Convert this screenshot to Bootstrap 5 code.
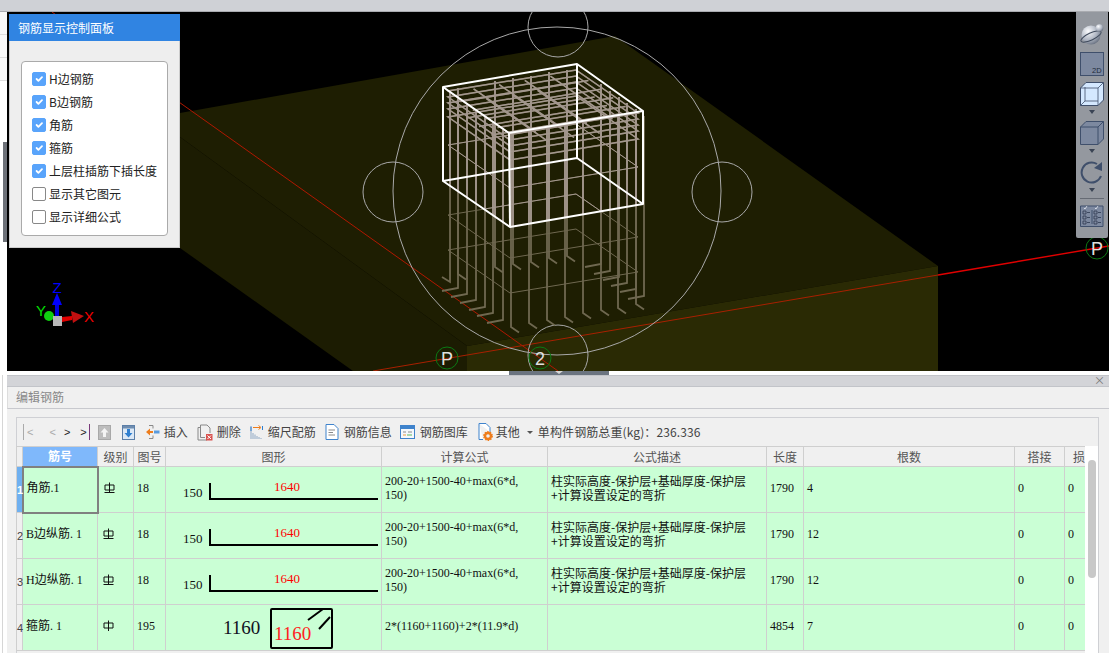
<!DOCTYPE html>
<html lang="zh-CN">
<head>
  <meta charset="UTF-8" />
  <title>编辑钢筋</title>
  <link href="https://cdn.jsdelivr.net/npm/bootstrap@5.3.0/dist/css/bootstrap.min.css" rel="stylesheet">
  <style>
    html, body { height: 100%; overflow: hidden; }
    body { background: #fff; font-family: "Noto Sans CJK SC", "Liberation Sans", sans-serif; font-size: 12px; color: #333; }
    .app-frame { width: 1109px; height: 653px; overflow: hidden; }
    .top-strip { height: 12px; background: #cfd1d6; border-bottom: 1px solid #a9abb0; }
    .view-row { height: 359px; }
    .side-strip { width: 7px; background: #fff; flex: none; position: relative; }
    .side-cell { height: 23px; border-bottom: 1px solid #ddd; background: #f8f8f8; }
    .side-handle { position: absolute; left: 3px; top: 130px; width: 4px; height: 100px; background: #6d7178; }
    .view-canvas { width: 1102px; background: #000; position: relative; }
    .view-canvas > svg { display: block; }
    .view-canvas text { font-family: "Liberation Sans", sans-serif; }

    .rebar-panel { position: absolute; left: 2px; top: 2px; width: 171px; height: 234px; background: #eee; border: 1px solid #ccc; border-top: 0; }
    .rebar-panel-title { height: 27px; margin: 0 -1px; padding-left: 9px; line-height: 27px; background: #3084e2; color: #fff; }
    .rebar-options { margin: 20px 11px 0; height: 175px; padding: 5px 0 0 10px; background: #fff; border: 1px solid #aaa; border-radius: 4px; }
    .rebar-options .form-check { display: flex; align-items: center; height: 23px; min-height: 0; margin: 0; padding: 0; color: #222; }
    .rebar-options .form-check-input { width: 14px; height: 14px; margin: 0 3px 0 0; float: none; border: 1px solid #888; border-radius: 2px; }
    .rebar-options .form-check-input:checked { background-color: #59a4fb; border-color: #59a4fb; }

    .view-tools { position: absolute; right: 1px; top: 0; width: 32px; height: 226px; padding-top: 10px; background: #94989f; border-radius: 0 0 2px 2px; }
    .view-tools svg { display: block; }
    .tool-gap { margin-top: 6px; }
    .tool-caret { width: 0; height: 0; margin: 4px 0 7px; border-left: 3px solid transparent; border-right: 3px solid transparent; border-top: 4px solid #3a4354; }
    .tool-line { width: 24px; height: 1px; margin: 6px 0 4px; background: #666b74; }

    .split-bar { height: 4px; background: #fff; }
    .split-grip { width: 100px; height: 4px; margin-left: 509px; background: #6b7480; position: relative; }
    .split-grip::after { content: ""; position: absolute; left: 46px; top: 0; border-left: 4px solid transparent; border-right: 4px solid transparent; border-top: 3px solid #d8d8d8; }

    .lower-row { height: 278px; }
    .lower-strip { width: 7px; flex: none; background: #fff; }
    .lower-strip div { width: 1px; height: 100%; margin-left: 2px; background: #d6d6d6; }
    .edit-pane { width: 1102px; background: #f0f0f0; }
    .pane-bar { height: 12px; background: #d3d4d8; border-top: 1px solid #c2c4c9; border-bottom: 1px solid #c2c4c9; line-height: 9px; text-align: right; padding-right: 4px; color: #777; font-size: 11px; }
    .pane-head { height: 22px; line-height: 20px; padding-left: 8px; color: #888; border-bottom: 1px solid #c8c9ce; border-left: 1px solid #ddd; }
    .grid-box { margin: 8px 10px 0 9px; border: 1px solid #cfd0d4; border-bottom: 0; height: 240px; }
    .grid-bar { height: 28px; padding-left: 6px; color: #444; white-space: nowrap; }
    .grid-bar svg { display: block; flex: none; }
    .nav-step { font-family: "Liberation Sans", sans-serif; font-size: 11px; color: #222; }
    .nav-step.is-off { color: #aaa; }
    .nav-pipe { border-left: 1px solid #aaa; padding-left: 3px; }
    .nav-pipe-end { border-right: 1px solid #7a3a7a; margin-left: 10px; padding-right: 2px; }
    .bar-text { margin-left: 4px; }
    .bar-caret { width: 0; height: 0; margin-left: 7px; border-left: 3px solid transparent; border-right: 3px solid transparent; border-top: 3px solid #555; }
    .bar-total { letter-spacing: .1px; margin-left: 5px; }

    .grid-body { height: 211px; margin-left: -1px; }
    .grid-scroll { width: 1069px; overflow: hidden; flex: none; }
    .scroll-rail { width: 14px; background: #fff; padding: 14px 0 0 3px; }
    .scroll-thumb { width: 8px; height: 118px; background: #c8c8c8; border-radius: 4px; }

    .rebar-table { table-layout: fixed; width: 1069px; margin: 0; border-color: #cfcfcf; font-family: "Liberation Serif", "Noto Sans CJK SC", serif; font-size: 12px; color: #111; }
    .rebar-table.table > :not(caption) > * > * { padding: 0; box-shadow: none; color: inherit; overflow: hidden; }
    .rebar-table.table thead th { height: 20px; line-height: 18px; background: #f0f0f0; color: #555; font-family: "Noto Sans CJK SC", sans-serif; font-weight: 400; text-align: center; vertical-align: middle; white-space: nowrap; }
    .rebar-table.table thead th.is-picked { background: #7fb8fb; color: #fff; font-weight: 700; }
    .rebar-table.table thead th.is-clipped { text-align: left; padding-left: 8px; }
    .rebar-table.table tbody td { height: 45px; background: #caffd5; vertical-align: middle; padding: 0 3px 3px; line-height: 14px; }
    .rebar-table.table tbody td.row-no { padding: 0; text-align: center; font-family: "Liberation Sans", sans-serif; font-size: 11px; color: #444; background: #f0f0f0; overflow: visible; }
    .rebar-table.table tbody td.row-no.is-picked { background: #6fb0f0; color: #fff; font-weight: 700; }
    .rebar-table.table tbody td.is-active { border: 2px solid #808080; }
    .rebar-table.table tbody td.shape-cell { padding: 0; }
    .rebar-table .cjk-text { font-family: "Noto Sans CJK SC", sans-serif; }
    .shape-cell svg { display: block; }
    .shape-cell text { font-family: "Liberation Serif", serif; }
    .grade-mark { display: block; margin-left: 2px; }
  </style>
</head>
<body>
<div class="app-frame d-flex flex-column">
  <div class="top-strip"></div>

  <div class="view-row d-flex">
    <div class="side-strip">
      <div class="side-cell"></div>
      <div class="side-cell"></div>
      <div class="side-cell"></div>
      <div class="side-handle"></div>
    </div>

    <div class="view-canvas">
      <svg id="scene" width="1102" height="359" viewBox="7 12 1102 359">
        <defs>
          <clipPath id="boxClip"><polygon points="443,87 577,64 643,111 643,204 510,227 443,181"/></clipPath>
          <g id="cage" fill="none" stroke="currentColor"></g>
        </defs>
        <!-- foundation slab -->
        <polygon points="180,113 615,36 938,266 467,346 180,137" fill="#1e1e02"/>
        <polygon points="180,137 467,346 467,371 353,371 180,248" fill="#1c1c02"/>
        <polygon points="467,346 938,266 938,371 467,371" fill="#2a2a04"/>
        <!-- axis lines -->
        <line x1="52" y1="12" x2="558" y2="371" stroke="#b01800"/>
        <line x1="373" y1="371" x2="938" y2="275" stroke="#a82000"/>
        <line x1="938" y1="275" x2="1109" y2="246" stroke="#e00000" stroke-width="1.4"/>
        <!-- section circles -->
        <g fill="none" stroke="#a8a8a8">
          <circle cx="557" cy="191" r="164"/>
          <circle cx="558" cy="27" r="30"/>
          <circle cx="393" cy="192" r="30"/>
          <circle cx="722" cy="192" r="30"/>
          <circle cx="558" cy="355" r="30"/>
        </g>
        <use href="#cage" style="color:#6f6850"/>
        <g clip-path="url(#boxClip)"><use href="#cage" style="color:#a3978e"/></g>
        <!-- column box -->
        <g fill="none" stroke="#fff" stroke-width="2" stroke-linejoin="round">
          <polygon points="443,87 577,64 643,111 509,133"/>
          <polygon points="443,181 577,158 643,204 510,227"/>
          <line x1="443" y1="87" x2="443" y2="181"/>
          <line x1="577" y1="64" x2="577" y2="158"/>
          <line x1="643" y1="111" x2="643" y2="204"/>
          <line x1="509" y1="133" x2="510" y2="227"/>
        </g>
        <!-- grid bubbles -->
        <g fill="none" stroke="#0b7a14">
          <circle cx="447" cy="358" r="11"/>
          <circle cx="540" cy="358" r="11"/>
          <circle cx="1097" cy="248" r="11"/>
        </g>
        <g fill="#e0e0e0" font-size="18" text-anchor="middle">
          <text x="447" y="365">P</text>
          <text x="540" y="365">2</text>
          <text x="1097" y="255">P</text>
        </g>
        <!-- axis triad -->
        <text x="57" y="293" fill="#0000ff" font-size="15" text-anchor="middle">Z</text>
        <rect x="55" y="303" width="4" height="14" fill="#0000e0"/>
        <polygon points="57,293 52,305 62,305" fill="#0000ff"/>
        <text x="41" y="316" fill="#00e000" font-size="15" text-anchor="middle">Y</text>
        <circle cx="49" cy="316" r="5" fill="#10d010"/>
        <polygon points="62,317 72,316 72,320 62,322" fill="#e00000"/>
        <polygon points="84,316 71,311 73,323" fill="#c01010"/>
        <text x="89" y="322" fill="#f00000" font-size="15" text-anchor="middle">X</text>
        <rect x="53" y="316" width="9" height="10" fill="#b8b8b8"/>
      </svg>

      <div class="rebar-panel">
        <div class="rebar-panel-title">钢筋显示控制面板</div>
        <div class="rebar-options">
          <label class="form-check"><input class="form-check-input" type="checkbox" checked>H边钢筋</label>
          <label class="form-check"><input class="form-check-input" type="checkbox" checked>B边钢筋</label>
          <label class="form-check"><input class="form-check-input" type="checkbox" checked>角筋</label>
          <label class="form-check"><input class="form-check-input" type="checkbox" checked>箍筋</label>
          <label class="form-check"><input class="form-check-input" type="checkbox" checked>上层柱插筋下插长度</label>
          <label class="form-check"><input class="form-check-input" type="checkbox">显示其它图元</label>
          <label class="form-check"><input class="form-check-input" type="checkbox">显示详细公式</label>
        </div>
      </div>

      <div class="view-tools d-flex flex-column align-items-center">
        <svg width="24" height="24" viewBox="0 0 24 24">
          <defs><radialGradient id="ballFill" cx=".35" cy=".3" r=".85"><stop offset="0" stop-color="#fbfcfe"/><stop offset=".55" stop-color="#aeb5c2"/><stop offset="1" stop-color="#4f5868"/></radialGradient></defs>
          <circle cx="11" cy="13" r="9.500" fill="url(#ballFill)"/>
          <ellipse cx="11" cy="14.500" rx="11" ry="3.500" transform="rotate(-25 11 14.500)" fill="none" stroke="#3f4a5c"/>
          <circle cx="19.500" cy="6" r="3.800" fill="url(#ballFill)"/>
        </svg>
        <svg class="tool-gap" width="24" height="24" viewBox="0 0 24 24">
          <rect x=".5" y=".5" width="23" height="23" fill="#7d89a0" stroke="#3f4f6b"/>
          <text x="12" y="21" font-family="Liberation Sans, sans-serif" font-size="7.5" fill="#20293a">2D</text>
        </svg>
        <svg class="tool-gap" width="24" height="24" viewBox="0 0 24 24">
          <polygon points=".5,6 6,.5 23.5,.5 23.5,18 18,23.5 .5,23.5" fill="#d4e8ff" stroke="#3f4f6b"/>
          <path d="M.5 6H18V23.5M18 6L23.5 .5M5 5V19H18M5 19L.5 23.5" fill="none" stroke="#3f4f6b" stroke-width=".8"/>
        </svg>
        <div class="tool-caret"></div>
        <svg width="24" height="24" viewBox="0 0 24 24">
          <polygon points=".5,6 6,.5 23.5,.5 23.5,18 18,23.5 .5,23.5" fill="#7d89a0" stroke="#3f4f6b"/>
          <path d="M.5 6H18V23.5M18 6L23.5 .5" fill="none" stroke="#3f4f6b"/>
        </svg>
        <div class="tool-caret"></div>
        <svg width="24" height="24" viewBox="0 0 24 24">
          <path d="M21 16A10 10 0 1 1 17 4" fill="none" stroke="#3f4f6b" stroke-width="2"/>
          <polygon points="22,2 22,11 14,8" fill="#3f4f6b"/>
        </svg>
        <div class="tool-caret mb-0"></div>
        <div class="tool-line"></div>
        <svg width="24" height="24" viewBox="0 0 24 24">
          <path d="M1 3H23V23.500H.5V3ZM12 7V21" fill="#7d89a0" stroke="#3f4f6b"/>
          <path d="M3 8h3v3H3zM3 13h3v3H3zM3 18h3v3H3zM14 8h3v3h-3zM14 13h3v3h-3zM14 18h3v3h-3z" fill="none" stroke="#2d394f" stroke-width=".8"/>
          <path d="M7 9.500h3M7 14.500h3M7 19.500h3M18 9.500h3M18 14.500h3M18 19.500h3" stroke="#2d394f" stroke-width=".8"/>
          <path d="M4 5l1 1 2-3M15 5l1 1 2-3" fill="none" stroke="#e8ecf4" stroke-width=".8"/>
        </svg>
      </div>
    </div>
  </div>

  <div class="split-bar"><div class="split-grip"></div></div>

  <div class="lower-row d-flex">
    <div class="lower-strip"><div></div></div>
    <div class="edit-pane">
      <div class="pane-bar">×</div>
      <div class="pane-head">编辑钢筋</div>

      <div class="grid-box">
        <div class="grid-bar d-flex align-items-center">
          <span class="nav-step nav-pipe is-off">&lt;</span>
          <span class="nav-step is-off ms-3">&lt;</span>
          <span class="nav-step ms-2">&gt;</span>
          <span class="nav-step nav-pipe-end">&gt;</span>
          <svg style="margin-left:8px" width="13" height="15" viewBox="0 0 13 15"><rect x=".5" y=".5" width="12" height="14" fill="#bdbdbd" stroke="#a8a8a8"/><path d="M6.500 3L2.500 7.500H5V12H8V7.500H10.500Z" fill="#f4f4f4"/></svg>
          <svg style="margin-left:11px" width="13" height="15" viewBox="0 0 13 15"><rect x=".5" y=".5" width="12" height="14" fill="#dbe8f6" stroke="#5c7fa8"/><rect x="1" y="1" width="11" height="2.500" fill="#6f8db0"/><path d="M6.500 12.500L2.500 8H5V4H8V8H10.500Z" fill="#2f7fd0"/></svg>
          <svg style="margin-left:10px" width="15" height="18" viewBox="0 0 15 18"><path d="M4 2.500H8V5.500M4 15.500H8V12.500" fill="none" stroke="#8a8a8a"/><path d="M1 9L5 5.500V8H8V10H5V12.500Z" fill="#ee7d1c"/><rect x="9" y="7.500" width="5.500" height="3" fill="#5a9bdd"/></svg>
          <span class="bar-text">插入</span>
          <svg style="margin-left:9px" width="16" height="17" viewBox="0 0 16 17"><path d="M3.500 3.500H1V16H10M3.500 1H10L13 4V9M3.500 1V13.500H8" fill="none" stroke="#888"/><rect x="9" y="10" width="6.500" height="6.500" fill="#d9534f"/><path d="M10.500 11.500l3.500 3.500M14 11.500l-3.500 3.500" stroke="#fff"/></svg>
          <span class="bar-text">删除</span>
          <svg style="margin-left:9px" width="13" height="15" viewBox="0 0 13 15"><path d="M1 1.500V14M3 14V8M5 14V9.500M7 14V11M9 14V12M11 14V13" stroke="#8fa8c4"/><path d="M1 1.500V6" stroke="#2f7fd0"/><path d="M3 2.500H10" stroke="#ee7d1c"/><path d="M8.500 .5L11 2.500L8.500 4.500" fill="none" stroke="#ee7d1c"/><path d="M12.500 1V5" stroke="#2f7fd0"/></svg>
          <span style="margin-left:5px">缩尺配筋</span>
          <svg style="margin-left:9px" width="14" height="16" viewBox="0 0 14 16"><path d="M1 .5H9L13 4.500V15.500H1Z" fill="#fff" stroke="#3f83cc"/><path d="M3.500 6H10M3.500 8.500H8M3.500 11H10" stroke="#8a8a8a"/></svg>
          <span style="margin-left:5px">钢筋信息</span>
          <svg style="margin-left:8px" width="15" height="14" viewBox="0 0 15 14"><rect x=".5" y=".5" width="14" height="13" fill="#f4f8fc" stroke="#3f83cc"/><rect x="1" y="1" width="13" height="3" fill="#3f83cc"/><path d="M3 7H6M8 7H12" stroke="#8a8a8a"/><path d="M3 10H6" stroke="#ee9a3a"/><path d="M7 10H12" stroke="#5cb85c"/></svg>
          <span style="margin-left:5px">钢筋图库</span>
          <svg style="margin-left:10px" width="15" height="18" viewBox="0 0 15 18"><path d="M1 .5H8L12 4.500V9M5 16.500H1V.5" fill="#fff" stroke="#3f83cc"/><circle cx="10" cy="13" r="3" fill="none" stroke="#ee7d1c" stroke-width="2.400"/><circle cx="10" cy="13" r="4.300" fill="none" stroke="#ee7d1c" stroke-width="1.200" stroke-dasharray="1.500 1.200"/></svg>
          <span style="margin-left:3px">其他</span>
          <span class="bar-caret"></span>
          <span class="bar-total">单构件钢筋总重(kg)：236.336</span>
        </div>

        <div class="grid-body d-flex">
          <div class="grid-scroll">
            <table class="table table-bordered rebar-table">
              <colgroup>
                <col style="width:6px"><col style="width:75px"><col style="width:36px"><col style="width:32px"><col style="width:216px"><col style="width:166px"><col style="width:219px"><col style="width:37px"><col style="width:211px"><col style="width:50px"><col style="width:21px">
              </colgroup>
              <thead>
                <tr>
                  <th></th><th class="is-picked">筋号</th><th>级别</th><th>图号</th><th>图形</th><th>计算公式</th><th>公式描述</th><th>长度</th><th>根数</th><th>搭接</th><th class="is-clipped">损</th>
                </tr>
              </thead>
              <tbody>
                <tr>
                  <td class="row-no is-picked">1</td>
                  <td class="is-active">角筋.1</td>
                  <td><svg class="grade-mark" width="11" height="12" viewBox="0 0 11 12"><path d="M1 3H10V8H1ZM5.500 .5V11M.5 10.500H10.500" fill="none" stroke="#111"/></svg></td>
                  <td>18</td>
                  <td class="shape-cell"><svg width="216" height="45" viewBox="0 0 216 45"><path d="M44 16V32H212" fill="none" stroke="#000" stroke-width="2"/><text x="17" y="30" font-size="13" fill="#111">150</text><text x="108" y="24" font-size="13" fill="#f00">1640</text></svg></td>
                  <td>200-20+1500-40+max(6*d,<br>150)</td>
                  <td class="cjk-text">柱实际高度-保护层+基础厚度-保护层<br>+计算设置设定的弯折</td>
                  <td>1790</td><td>4</td><td>0</td><td>0</td>
                </tr>
                <tr>
                  <td class="row-no">2</td>
                  <td>B边纵筋. 1</td>
                  <td><svg class="grade-mark" width="11" height="12" viewBox="0 0 11 12"><path d="M1 3H10V8H1ZM5.500 .5V11M.5 10.500H10.500" fill="none" stroke="#111"/></svg></td>
                  <td>18</td>
                  <td class="shape-cell"><svg width="216" height="45" viewBox="0 0 216 45"><path d="M44 16V32H212" fill="none" stroke="#000" stroke-width="2"/><text x="17" y="30" font-size="13" fill="#111">150</text><text x="108" y="24" font-size="13" fill="#f00">1640</text></svg></td>
                  <td>200-20+1500-40+max(6*d,<br>150)</td>
                  <td class="cjk-text">柱实际高度-保护层+基础厚度-保护层<br>+计算设置设定的弯折</td>
                  <td>1790</td><td>12</td><td>0</td><td>0</td>
                </tr>
                <tr>
                  <td class="row-no">3</td>
                  <td>H边纵筋. 1</td>
                  <td><svg class="grade-mark" width="11" height="12" viewBox="0 0 11 12"><path d="M1 3H10V8H1ZM5.500 .5V11M.5 10.500H10.500" fill="none" stroke="#111"/></svg></td>
                  <td>18</td>
                  <td class="shape-cell"><svg width="216" height="45" viewBox="0 0 216 45"><path d="M44 16V32H212" fill="none" stroke="#000" stroke-width="2"/><text x="17" y="30" font-size="13" fill="#111">150</text><text x="108" y="24" font-size="13" fill="#f00">1640</text></svg></td>
                  <td>200-20+1500-40+max(6*d,<br>150)</td>
                  <td class="cjk-text">柱实际高度-保护层+基础厚度-保护层<br>+计算设置设定的弯折</td>
                  <td>1790</td><td>12</td><td>0</td><td>0</td>
                </tr>
                <tr>
                  <td class="row-no">4</td>
                  <td>箍筋. 1</td>
                  <td><svg class="grade-mark" width="11" height="12" viewBox="0 0 11 12"><path d="M1 3H10V8H1ZM5.500 .5V11" fill="none" stroke="#111"/></svg></td>
                  <td>195</td>
                  <td class="shape-cell"><svg width="216" height="45" viewBox="0 0 216 45"><text x="57" y="29" font-size="19" fill="#112">1160</text><rect x="105" y="4" width="61" height="39" rx="1" fill="none" stroke="#000" stroke-width="2"/><text x="108" y="35" font-size="19" fill="#f22">1160</text><path d="M142 15L157 4M153 24L164 12" stroke="#000" stroke-width="2"/></svg></td>
                  <td>2*(1160+1160)+2*(11.9*d)</td>
                  <td></td>
                  <td>4854</td><td>7</td><td>0</td><td>0</td>
                </tr>
              </tbody>
            </table>
          </div>
          <div class="scroll-rail flex-grow-1"><div class="scroll-thumb"></div></div>
        </div>
      </div>
    </div>
  </div>
</div>

<script>
  // rebar cage: [x, foot end y, bar length on screen]
  const bars = [
    // front left face, feet run left
    ...[[458,288],[467,294],[476,300],[485,307],[493,313],[503,320]].map(b => [...b, 190, -16, 3]),
    // back right face, feet run left
    ...[[601,264],[610,271],[619,277],[627,283],[636,289],[644,296]].map(b => [...b, 180, -16, 3]),
    // front right face, feet run right
    ...[[511,327],[529,323],[547,320],[565,317],[583,313],[601,310],[618,308],[636,304]].map(b => [...b, 194, 8, 5.5]),
    // back row, feet run right
    ...[[513,264],[531,262],[549,258],[567,256],[495,267],[458,274]].map(b => [...b, 186, 8, 5.5]),
    [450, 282, 190, -8, -5]
  ];
  // front corner y of each stirrup
  const hoops = [134, 140, 146, 152, 160, 188, 258, 293];
  // levels of the top mesh: front corner y and where the ties sit
  const meshLevels = [[136, [0.2, 0.4, 0.6, 0.8]], [148, [0.3, 0.5, 0.7]]];

  const NS = 'http://www.w3.org/2000/svg';
  const cage = document.getElementById('cage');

  function addPath(d, width) {
    const p = document.createElementNS(NS, 'path');
    p.setAttribute('d', d);
    p.setAttribute('stroke-width', width);
    cage.appendChild(p);
  }

  hoops.forEach(y => {
    addPath(`M448 ${y - 43}L510 ${y}L638 ${y - 21}L576 ${y - 64}Z`, y < 170 ? 1.5 : 1);
  });

  meshLevels.forEach(([y, ties]) => {
    ties.forEach(t => {
      const ax = 448 + 62 * t, ay = y - 43 + 43 * t;
      addPath(`M${ax} ${ay}L${ax + 128} ${ay - 21}`, 1.5);
      const bx = 510 + 128 * t, by = y - 21 * t;
      addPath(`M${bx} ${by}L${bx - 62} ${by - 43}`, 1.5);
    });
  });

  bars.forEach(([x, y, len, fx, fy]) => {
    addPath(`M${x} ${y - len}V${y}l${fx} ${fy}`, 1.8);
  });
</script>
<script src="https://cdn.jsdelivr.net/npm/bootstrap@5.3.0/dist/js/bootstrap.bundle.min.js"></script>
</body>
</html>
